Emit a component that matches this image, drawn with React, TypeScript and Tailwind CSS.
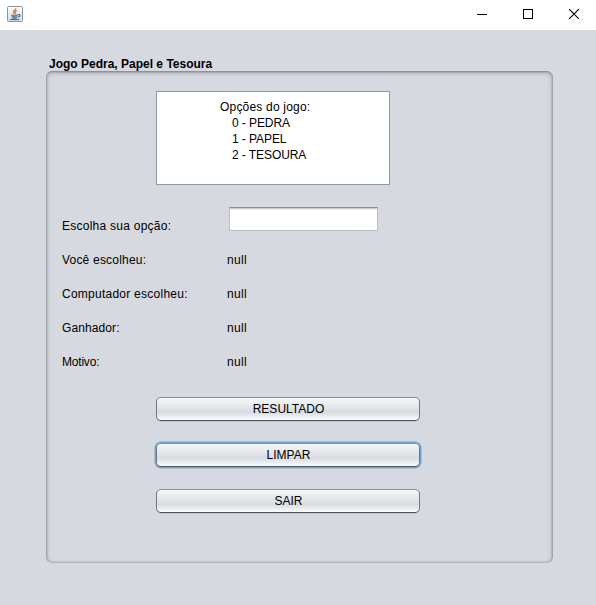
import React from "react";

function JavaIcon() {
  return (
    <svg width="16" height="16" viewBox="0 0 16 16" fill="none">
      <defs>
        <linearGradient id="tile" x1="0" y1="0" x2="0" y2="1">
          <stop offset="0" stopColor="#ffffff" />
          <stop offset="1" stopColor="#c9dbe5" />
        </linearGradient>
      </defs>
      <rect x="0.5" y="0.5" width="15" height="15" rx="1" fill="url(#tile)" stroke="#8794a0" />
      <path d="M8.8 2.2C9.1 4 6.2 4.6 6.3 6.2C6.4 7 7.2 7.3 7.3 8.2M9.8 4.3C8 5.3 7.9 6 8.5 6.8C8.7 7.2 8.5 7.7 8.2 8.2" stroke="#ec7f24" strokeWidth="1.4" />
      <path d="M4 9.3H10.8M4.6 10.8H10.3M5.2 12.1H9.6M10.8 8.6C13.8 7.9 13.6 10.5 10.8 11.2M3 13.5H12" stroke="#456a8d" strokeWidth="1.1" />
    </svg>
  );
}

function TitleBar() {
  return (
    <header className="flex h-[30px] shrink-0 items-start justify-between bg-white pr-[17px] pl-[7px]">
      <div className="pt-[6px]">
        <JavaIcon />
      </div>
      <div className="flex gap-[36px] pt-[9px]">
        <svg width="10" height="10" shapeRendering="crispEdges">
          <path d="M0 5.5H10" stroke="#000" />
        </svg>
        <svg width="10" height="10" shapeRendering="crispEdges">
          <rect x="0.5" y="0.5" width="9" height="9" fill="none" stroke="#000" />
        </svg>
        <svg width="10" height="10">
          <path d="M0 0L10 10M10 0L0 10" stroke="#000" strokeWidth="1.1" />
        </svg>
      </div>
    </header>
  );
}

const fields = [
  { label: "Você escolheu:", track: "tracking-[0.2px]" },
  { label: "Computador escolheu:", track: "tracking-[0.25px]" },
  { label: "Ganhador:", track: "tracking-[0.1px]" },
  { label: "Motivo:", track: "tracking-[-0.2px]" },
];

function NimbusButton({ label, focused = false }: { label: string; focused?: boolean }) {
  return (
    <button
      className={
        "h-[24px] w-[264px] rounded-[5px] border border-t-[#8d9197] border-r-[#73777d] border-b-[#4e5359] border-l-[#73777d] bg-[linear-gradient(to_bottom,#f6f7f9_0%,#e2e4e8_45%,#d7dae0_65%,#e8ebf0_82%,#fafcff_100%)] pt-px pl-px text-center leading-[21px] " +
        (focused
          ? "shadow-[0_0_0_1.5px_#73a4d1]"
          : "shadow-[0_1px_0_#c4c8ce]")
      }
    >
      {label}
    </button>
  );
}

export default function App() {
  return (
    <div className="flex h-[605px] w-[596px] flex-col overflow-hidden bg-[#d6d9df] font-['Liberation_Sans',Arial,sans-serif] text-[12px] leading-[16px] text-black">
      <TitleBar />
      <main className="pt-[26px] pl-[46px]">
        <h1 className="h-[15px] pl-[3px] text-[12px] leading-[16px] font-bold">
          Jogo Pedra, Papel e Tesoura
        </h1>
        <section className="h-[492px] w-[507px] rounded-[6px] border border-t-[#8e9196] border-r-[#a1a4a9] border-b-[#b1b4b9] border-l-[#a1a4a9] pt-[19px] pl-[15px] shadow-[inset_0_1px_1px_#a9acb1,inset_0_2px_4px_#b8bbc1,inset_1px_0_2px_#b8bbc1,inset_-1px_0_2px_#b8bbc1]">
          <div className="ml-[94px] h-[94px] w-[234px] border border-[#9297a1] bg-white pt-[7px] pl-[63px]">
            <p className="tracking-[0.2px]">Opções do jogo:</p>
            <ul className="pl-[12px] tracking-[-0.08px]">
              <li>0 - PEDRA</li>
              <li>1 - PAPEL</li>
              <li>2 - TESOURA</li>
            </ul>
          </div>
          <div className="mt-[22px] flex h-[36px] items-start">
            <label htmlFor="option" className="w-[167px] pt-[11px] tracking-[0.25px]">
              Escolha sua opção:
            </label>
            <input
              id="option"
              className="h-[24px] w-[149px] border border-t-[#8d8e8f] border-r-[#bdbebf] border-b-[#bdbebf] border-l-[#bdbebf] bg-white shadow-[inset_0_1px_0_#cdcdcd,inset_0_2px_0_#efefef] outline-none"
            />
          </div>
          {fields.map(({ label, track }) => (
            <div key={label} className="flex h-[34px] items-center">
              <span className={"w-[165px] " + track}>{label}</span>
              <span className="tracking-[0.3px]">null</span>
            </div>
          ))}
          <div className="mt-[18px] ml-[94px] flex w-[264px] flex-col gap-[22px]">
            <NimbusButton label="RESULTADO" />
            <NimbusButton label="LIMPAR" focused />
            <NimbusButton label="SAIR" />
          </div>
        </section>
      </main>
    </div>
  );
}
